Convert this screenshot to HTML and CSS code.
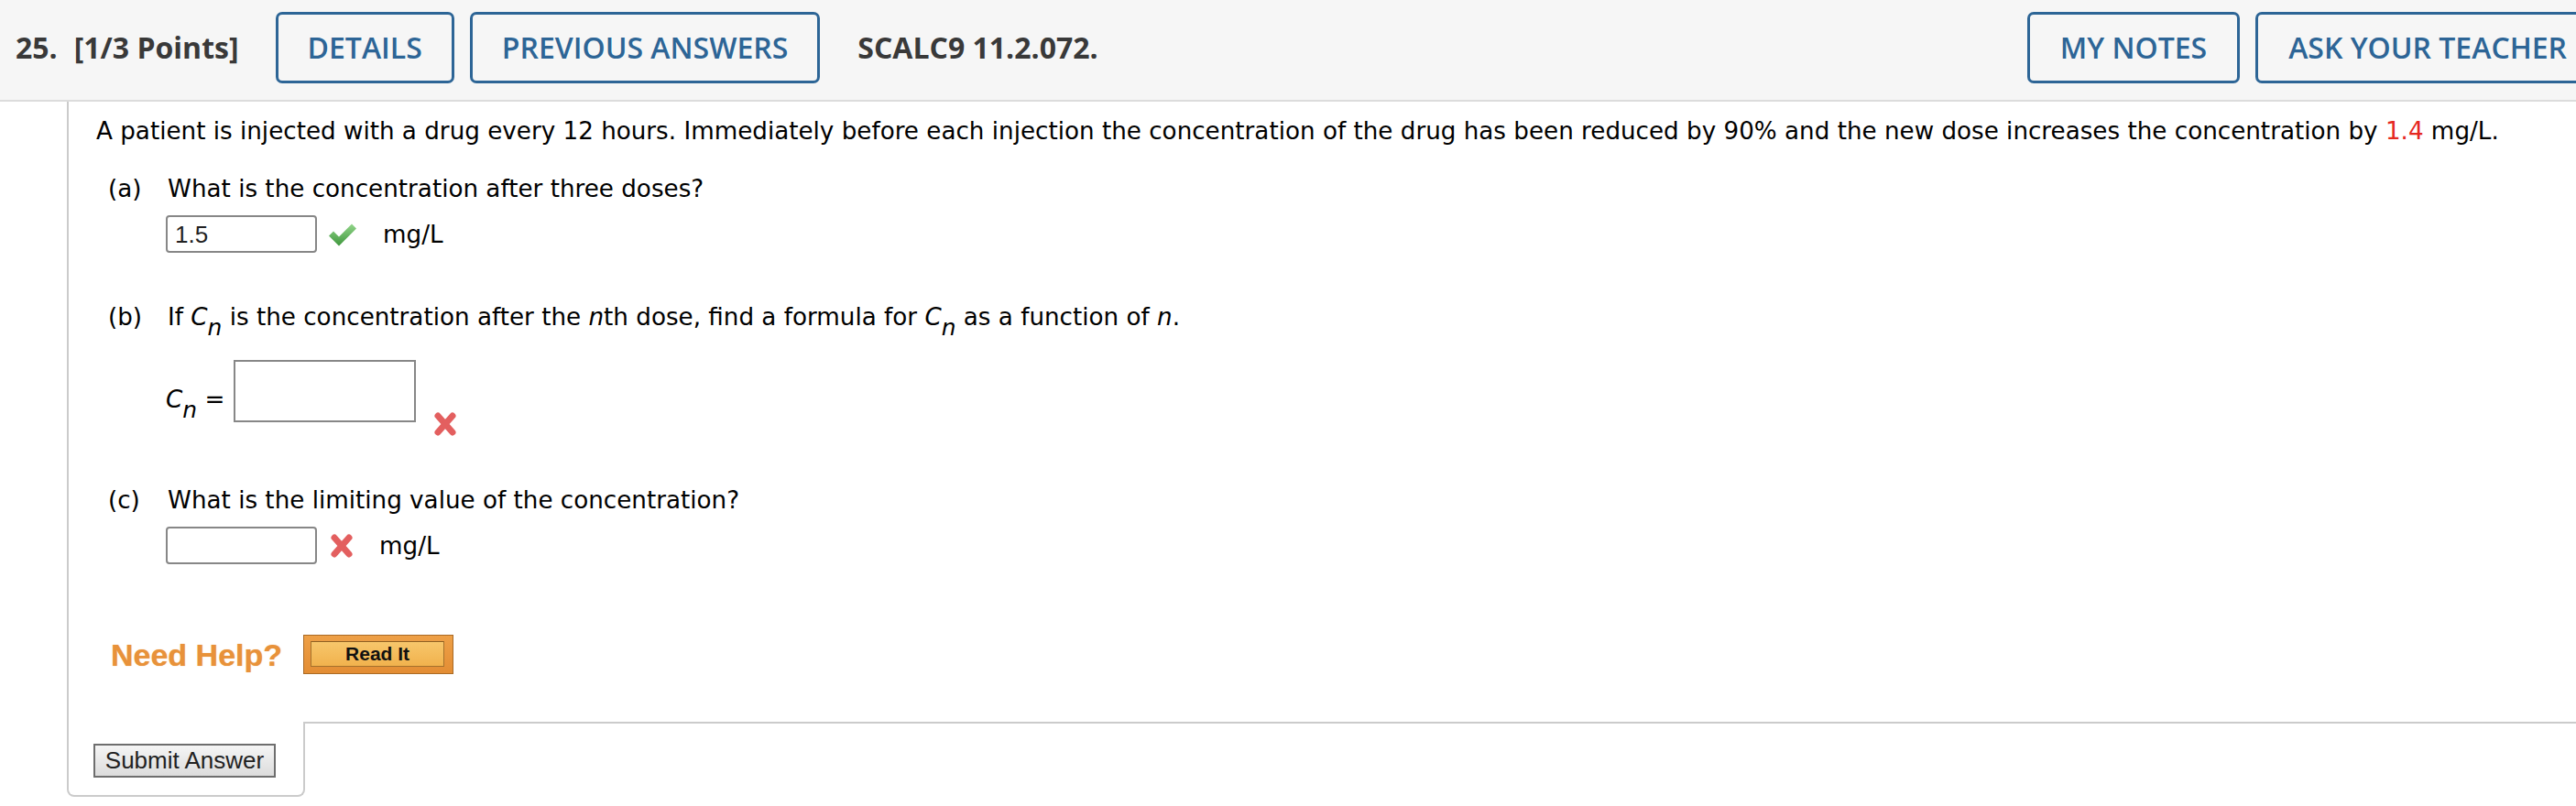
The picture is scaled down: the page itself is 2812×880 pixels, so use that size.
FILE: index.html
```html
<!DOCTYPE html>
<html lang="en">
<head>
<meta charset="utf-8">
<title>Question 25</title>
<link rel="stylesheet" href="styles.css">
</head>
<body>
<header class="qhead">
  <span class="qnum">25.</span>
  <span class="qpts">[1/3 Points]</span>
  <button class="hbtn hbtn-first">DETAILS</button>
  <button class="hbtn">PREVIOUS ANSWERS</button>
  <span class="qcode">SCALC9 11.2.072.</span>
  <div class="hright">
    <button class="hbtn">MY NOTES</button>
    <button class="hbtn">ASK YOUR TEACHER</button>
  </div>
</header>
<main class="card">
  <div class="body">
    <p class="intro">A patient is injected with a drug every 12 hours. Immediately before each injection the concentration of the drug has been reduced by 90% and the new dose increases the concentration by <span class="red">1.4</span> mg/L.</p>

    <div class="qline q-a"><span class="plabel">(a)</span><span>What is the concentration after three doses?</span></div>
    <div class="ans ans-a">
      <span class="box box-round">1.5</span>
      <svg class="check" width="32" height="28" viewBox="0 0 32 28" aria-hidden="true">
        <defs><linearGradient id="gck" x1="0" y1="0" x2="0" y2="1"><stop offset="0" stop-color="#92d58a"/><stop offset="1" stop-color="#3f973d"/></linearGradient></defs>
        <path d="M1 15.5 L6 10.5 L12 16.5 L26 2.5 L31 7.5 L12 26.5 Z" fill="url(#gck)"/>
      </svg>
      <span class="unit">mg/L</span>
    </div>

    <div class="qline q-b"><span class="plabel">(b)</span><span>If <i>C</i><sub><i>n</i></sub> is the concentration after the <i>n</i>th dose, find a formula for <i>C</i><sub><i>n</i></sub> as a function of <i>n</i>.</span></div>
    <div class="ans ans-b">
      <span class="cnlabel"><i>C</i><sub><i>n</i></sub> =</span>
      <span class="box box-big"></span>
      <svg class="xmark xmark-b" width="28" height="30" viewBox="0 0 28 30" aria-hidden="true">
        <g stroke="#e35f5f" stroke-width="7" stroke-linecap="round"><line x1="6" y1="6" x2="22" y2="24"/><line x1="22" y1="6" x2="6" y2="24"/></g>
      </svg>
    </div>

    <div class="qline q-c"><span class="plabel">(c)</span><span>What is the limiting value of the concentration?</span></div>
    <div class="ans ans-c">
      <span class="box box-round"></span>
      <svg class="xmark xmark-c" width="28" height="30" viewBox="0 0 28 30" aria-hidden="true">
        <g stroke="#e35f5f" stroke-width="7" stroke-linecap="round"><line x1="6" y1="6" x2="22" y2="24"/><line x1="22" y1="6" x2="6" y2="24"/></g>
      </svg>
      <span class="unit unit-c">mg/L</span>
    </div>

    <div class="help">
      <span class="needhelp">Need Help?</span>
      <span class="readit"><span class="readit-in">Read It</span></span>
    </div>
  </div>
  <div class="foot">
    <div class="tab"><button class="submit">Submit Answer</button></div>
    <div class="rest"></div>
  </div>
</main>
</body>
</html>
```

FILE: styles.css
```css
html, body {
  margin: 0;
  padding: 0;
  overflow: hidden;
  background: #ffffff;
}

body {
  width: 2812px;
  font-family: "DejaVu Sans", Verdana, sans-serif;
  color: #000;
}

/* ---------- header ---------- */
.qhead {
  display: flex;
  align-items: flex-start;
  height: 96px;
  padding: 13px 0 0 17px;
  background: #f6f6f6;
  border-bottom: 2px solid #dcdcdc;
  font-family: "Open Sans", sans-serif;
  white-space: nowrap;
}

.qnum,
.qpts,
.qcode {
  font-weight: 700;
  font-size: 32px;
  line-height: 78px;
  color: #393939;
}

.qpts { margin-left: 18px; }
.qcode { margin-left: 41px; }

.hbtn {
  height: 78px;
  box-sizing: border-box;
  margin: 0 0 0 17px;
  padding: 0 32px;
  border: 3px solid #2d6596;
  border-radius: 7px;
  background: transparent;
  color: #2d6596;
  font-family: "Open Sans", sans-serif;
  font-weight: 600;
  font-size: 32px;
  line-height: 1;
}

.hbtn-first { margin-left: 40px; }

.hright {
  display: flex;
  margin-left: auto;
  margin-right: -26px;
}

.hright .hbtn { padding: 0 33px; }

/* ---------- card ---------- */
.card {
  margin-left: 73px;
}

.body {
  border-left: 2px solid #cbcbcb;
  padding: 16px 0 52px 30px;
  font-size: 26.2px;
  line-height: 32px;
}

.intro { margin: 0; }
.red { color: #e5281f; }

sub {
  font-size: 0.95em;
  vertical-align: -0.45em;
  line-height: 0;
}

.qline {
  display: flex;
  margin-left: 13px;
}

.plabel { width: 65px; flex: none; }

.q-a { margin-top: 31px; }
.q-b { margin-top: 54px; }
.q-c { margin-top: 52px; }

.ans {
  display: flex;
  align-items: center;
  margin-left: 76px;
}

.ans-a { margin-top: 13px; }
.ans-b { margin-top: 31px; align-items: flex-start; }
.ans-c { margin-top: 13px; }

.box {
  box-sizing: border-box;
  display: flex;
  align-items: center;
  border: 2px solid #878787;
  background: #fff;
  font-family: "Liberation Sans", Arial, sans-serif;
  font-size: 26px;
  color: #222;
}

.box-round {
  width: 165px;
  height: 41px;
  border-radius: 4px;
  padding-left: 8px;
}

.box-big {
  width: 199px;
  height: 68px;
  margin-left: 10px;
}

.cnlabel {
  align-self: center;
  white-space: pre;
}

.check { margin-left: 12px; flex: none; }
.unit { margin-left: 28px; }

.xmark { flex: none; }
.xmark-b { margin: 55px 0 0 18px; }
.xmark-c { margin-left: 13px; }
.unit-c { margin-left: 27px; }

/* ---------- help ---------- */
.help {
  display: flex;
  align-items: center;
  margin-top: 77px;
  margin-left: 16px;
}

.needhelp {
  font-family: "Liberation Sans", Arial, sans-serif;
  font-weight: 700;
  font-size: 34px;
  color: #e8923a;
  text-shadow: 0 0 1px rgba(232, 146, 58, 0.7);
}

.readit {
  display: flex;
  box-sizing: border-box;
  width: 164px;
  height: 43px;
  margin-left: 23px;
  padding: 6px 9px 7px 7px;
  border: 1px solid #a96a25;
  background: linear-gradient(#eea047, #e38d34);
}

.readit-in {
  flex: 1;
  display: flex;
  align-items: center;
  justify-content: center;
  border: 1px solid #a5722c;
  border-top-color: #8f6024;
  background: linear-gradient(#f7c66b, #f1b24d);
  font-family: "Liberation Sans", Arial, sans-serif;
  font-weight: 700;
  font-size: 21px;
  color: #111;
}

/* ---------- footer ---------- */
.foot {
  display: flex;
}

.tab {
  box-sizing: content-box;
  width: 229px;
  padding: 24px 0 19px 27px;
  border-left: 2px solid #cbcbcb;
  border-right: 2px solid #cbcbcb;
  border-bottom: 2px solid #cbcbcb;
  border-radius: 0 0 8px 8px;
}

.submit {
  display: block;
  width: 199px;
  height: 37px;
  margin: 0;
  padding: 0;
  box-sizing: border-box;
  border: 2px solid #6e6e6e;
  border-radius: 0;
  background: linear-gradient(#f5f5f5, #dcdcdc);
  font-family: "Liberation Sans", Arial, sans-serif;
  font-size: 26px;
  color: #222;
}

.rest {
  flex: 1;
  border-top: 2px solid #cbcbcb;
}
```
